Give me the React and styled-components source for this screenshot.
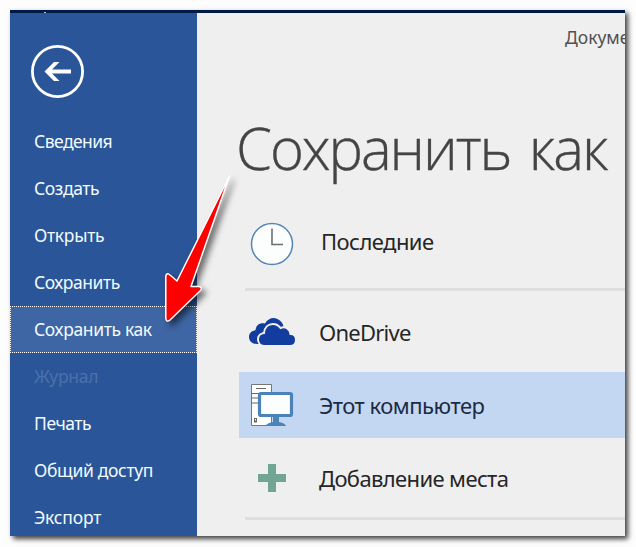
import React from "react";
import styled, { createGlobalStyle } from "styled-components";

const GlobalStyle = createGlobalStyle`
  body { margin: 0; background: #fdfdfd; overflow: hidden; }
  * { box-sizing: border-box; }
`;

const Page = styled.div`
  position: relative;
  width: 636px;
  height: 547px;
  padding: 10px 0 0 10px;
  font-family: "Noto Sans", "Open Sans", sans-serif;
`;

const Window = styled.div`
  width: 615px;
  height: 526px;
  display: flex;
  flex-direction: column;
  overflow: hidden;
  background: #efefef;
`;

const WindowShadow = styled.div`
  width: 615px;
  height: 526px;
  box-shadow: 3px 3px 5px rgba(0, 0, 0, 0.75);
`;

const TitleStrip = styled.div`
  flex: none;
  height: 3px;
  padding-left: 34px;
  background: #001a48;
`;

const TitleMark = styled.div`
  width: 2px;
  height: 3px;
  border-bottom: 1px solid #b5c4dc;
`;

const Body = styled.div`
  flex: 1;
  display: flex;
  min-height: 0;
`;

const Sidebar = styled.nav`
  flex: none;
  width: 187px;
  background: #2a5699;
`;

const BackButton = styled.button`
  display: block;
  width: 53px;
  height: 53px;
  margin: 32px 0 20px 21px;
  padding: 0;
  border: 0;
  background: none;
`;

const NavItem = styled.div`
  display: flex;
  align-items: center;
  height: 47px;
  padding-left: ${(p) => (p.$active ? 23 : 24)}px;
  padding-bottom: 2px;
  border: ${(p) => (p.$active ? "1px dotted #fff" : "0")};
  background: ${(p) => (p.$active ? "#3e66a4" : "transparent")};
  color: ${(p) => (p.$disabled ? "#4b70ab" : "#f2fbff")};
  font-size: 17.5px;
  line-height: 24px;
  white-space: nowrap;
  letter-spacing: ${(p) => p.$spacing}px;
`;

const Content = styled.main`
  flex: 1;
  min-width: 0;
  display: flex;
  flex-direction: column;
  overflow: hidden;
  color: #262626;
`;

const DocumentName = styled.div`
  height: 50px;
  padding: 12px 0 0 368px;
  font-size: 17.5px;
  line-height: 24px;
  color: #505050;
  white-space: nowrap;
`;

const Heading = styled.h1`
  margin: 0;
  height: 135px;
  padding: 45px 0 0 39px;
  font-family: "Open Sans", "Noto Sans", sans-serif;
  font-size: 58px;
  line-height: 80px;
  font-weight: 300;
  letter-spacing: -2.1px;
  word-spacing: 5.5px;
  -webkit-text-stroke: 0.35px #444;
  color: #444;
  white-space: nowrap;
`;

const Place = styled.div`
  flex: none;
  display: flex;
  align-items: center;
  height: ${(p) => p.$height}px;
  margin-left: 42px;
  padding-left: 9px;
  background: ${(p) => (p.$selected ? "#c3d6f2" : "transparent")};
  color: ${(p) => (p.$selected ? "#1b2a42" : "#262626")};
`;

const PlaceIcon = styled.div`
  flex: none;
  width: 48px;
  height: 48px;
  svg { display: block; }
`;

const PlaceLabel = styled.span`
  margin-left: ${(p) => p.$gap || 23}px;
  padding-bottom: ${(p) => p.$lift || 0}px;
  font-size: 22px;
  line-height: 30px;
  white-space: nowrap;
  letter-spacing: ${(p) => p.$spacing}px;
`;

const Divider = styled.div`
  flex: none;
  height: 3px;
  margin-left: 48px;
  background: #dedede;
`;

const PointerArrow = styled.svg`
  position: absolute;
  left: 150px;
  top: 160px;
  overflow: visible;
  filter: drop-shadow(4px 4px 3px rgba(0, 0, 0, 0.55));
`;

const navItems = [
  { label: "Сведения", spacing: -0.55 },
  { label: "Создать", spacing: -0.4 },
  { label: "Открыть", spacing: -0.3 },
  { label: "Сохранить", spacing: -0.45 },
  { label: "Сохранить как", spacing: -0.35, active: true },
  { label: "Журнал", spacing: -0.3, disabled: true },
  { label: "Печать", spacing: -0.45 },
  { label: "Общий доступ", spacing: -0.33 },
  { label: "Экспорт", spacing: -0.2 },
];

const BackIcon = () => (
  <svg width="53" height="53" viewBox="0 0 53 53">
    <circle cx="26.5" cy="26.5" r="25.1" fill="none" stroke="#fff" strokeWidth="2.8" />
    <path d="M13.500 26.500L23 17H28.500L21 24.600H40V28.400H21L28.500 36H23Z" fill="#fff" />
  </svg>
);

const ClockIcon = () => (
  <svg width="48" height="48" viewBox="0 0 48 48" fill="none">
    <circle cx="24" cy="25" r="20.5" fill="#fcfdfd" stroke="#5685b8" strokeWidth="1.5" />
    <path d="M24 9.5V25.5H35" stroke="#6e6e6e" strokeWidth="1.6" />
  </svg>
);

const CloudIcon = () => (
  <svg width="48" height="48" viewBox="0 -1 48 48">
    <path
      d="M9 35C4 35 1 31.800 1 28C1 24 4 21.500 7.500 21.200C8 16 12 13.300 17 14.500C20 9.500 25 7.800 29.500 10C33 11.600 35 14.500 35.500 17.500L25 23L14 35Z"
      fill="#123d9f"
    />
    <path
      d="M17 37C12.500 37 10 34 10 30.500C10 27 12.500 24.300 16 24C16.500 18.500 20 15 25 15C28.500 15 31 17 32.500 19C37.500 17 42 20 42.500 25C46 25 48 28 48 31C48 35 45.500 37 42 37Z"
      fill="#123d9f"
      stroke="#efefef"
      strokeWidth="2"
    />
  </svg>
);

const ComputerIcon = () => (
  <svg width="48" height="48" viewBox="0 0 48 48">
    <path d="M3.500 3.500H23.500V44.500H3.500Z" fill="#fff" stroke="#777" />
    <path d="M8 7.500H18M3 12.500H23M3 17H12M3 22H12" stroke="#666" />
    <path d="M6 37H9V41.500H6Z" fill="#666" />
    <path d="M7.500 38V39.500" stroke="#fff" />
    <rect x="11.500" y="12.500" width="32" height="22" rx="1.500" fill="#fcfdfd" stroke="#4b82b7" strokeWidth="3.200" />
    <path d="M25 36H31V41C34 41.500 37 42.500 38 45H17C19 42.500 22 41.500 25 41Z" fill="#4b82b7" />
  </svg>
);

const PlusIcon = () => (
  <svg width="48" height="48" viewBox="0 0 48 48">
    <path d="M20 10H28V20H38V28H28V38H20V28H10V20H20Z" fill="#71a694" />
  </svg>
);

export default function App() {
  return (
    <Page>
      <GlobalStyle />
      <WindowShadow>
        <Window>
          <TitleStrip><TitleMark /></TitleStrip>
          <Body>
            <Sidebar>
              <BackButton aria-label="Назад"><BackIcon /></BackButton>
              {navItems.map((item) => (
                <NavItem key={item.label} $active={item.active} $disabled={item.disabled} $spacing={item.spacing}>
                  {item.label}
                </NavItem>
              ))}
            </Sidebar>
            <Content>
              <DocumentName>Документ1</DocumentName>
              <Heading>Сохранить как</Heading>
              <Place $height={90}>
                <PlaceIcon><ClockIcon /></PlaceIcon>
                <PlaceLabel $gap={25} $lift={4} $spacing={-0.55}>Последние</PlaceLabel>
              </Place>
              <Divider />
              <Place $height={81}>
                <PlaceIcon><CloudIcon /></PlaceIcon>
                <PlaceLabel $spacing={-0.75}>OneDrive</PlaceLabel>
              </Place>
              <Place $height={66} $selected>
                <PlaceIcon><ComputerIcon /></PlaceIcon>
                <PlaceLabel $spacing={-0.5}>Этот компьютер</PlaceLabel>
              </Place>
              <Place $height={79}>
                <PlaceIcon><PlusIcon /></PlaceIcon>
                <PlaceLabel $spacing={-0.62}>Добавление места</PlaceLabel>
              </Place>
              <Divider />
            </Content>
          </Body>
        </Window>
      </WindowShadow>
      <PointerArrow width="100" height="180" viewBox="0 0 100 180">
        <path
          d="M79.500 16L41 126.500H49Q53 127.500 50 131L20 160Q16 163 15.800 158V116Q17 112 20 115L27 121Z"
          fill="#ff0000"
          stroke="#fff"
          strokeWidth="1.500"
          strokeLinejoin="round"
        />
      </PointerArrow>
    </Page>
  );
}
